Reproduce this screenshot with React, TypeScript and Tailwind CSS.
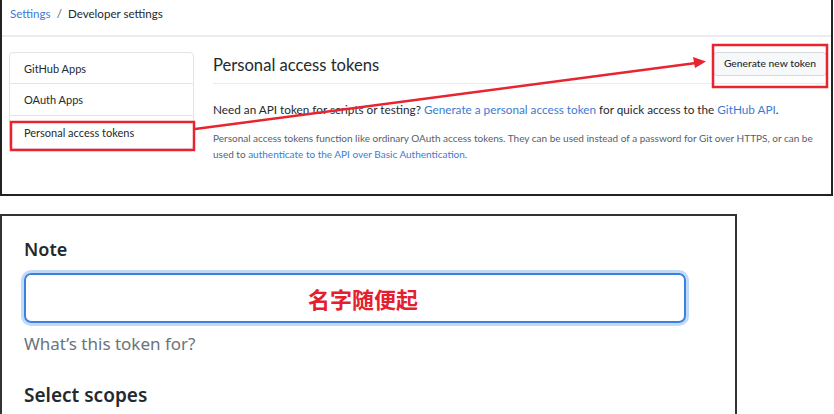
export default function App() {
  const font = { fontFamily: '"Noto Sans", "Noto Sans CJK SC", sans-serif' };
  return (
    <div className="w-[834px] h-[414px] bg-white overflow-hidden relative font-['Noto_Sans','Noto_Sans_CJK_SC',sans-serif]">
      {/* top screenshot */}
      <div className="relative h-[196px] w-[833px] border-l-2 border-r-2 border-b-2 border-[#222] text-[#24292e] font-['Lato',sans-serif]">
        <div className="h-[37px] border-b-2 border-[#eaecef] px-[8px] pt-[5px] flex items-start text-[11.6px] leading-[18px]">
          <span className="text-[#3b7bd4]">Settings</span>
          <span className="mx-[6px] text-[#586069]">/</span>
          <span className="text-[#24292e]">Developer settings</span>
        </div>
        <div className="flex items-start pl-[7px] pt-[15px] pr-[4px]">
          <div className="w-[185px] border border-[#e1e4e8] rounded-[4px] text-[11px] shrink-0">
            <div className="h-[31px] pt-[2px] flex items-center px-[14px] border-b border-[#e1e4e8]">GitHub Apps</div>
            <div className="h-[32px] pt-[2px] flex items-center px-[14px] border-b border-[#e1e4e8]">OAuth Apps</div>
            <div className="h-[32px] pt-[2px] flex items-center px-[14px]">Personal access tokens</div>
          </div>
          <div className="flex-1 ml-[19px]">
            <div className="h-[32px] flex items-center justify-between border-b border-[#eaecef]">
              <span className="text-[16.6px] leading-none -mt-[4px]">Personal access tokens</span>
              <button className="h-[24px] px-[10px] text-[10.3px] font-medium border border-[#d6d9dc] rounded-[4px] bg-[#f6f8fa] mb-[7px]">
                Generate new token
              </button>
            </div>
            <p className="mt-[18px] text-[11.75px] leading-[16px] whitespace-nowrap">
              Need an API token for scripts or testing?{" "}
              <span className="text-[#3b7bd4]">Generate a personal access token</span> for quick access to the{" "}
              <span className="text-[#3b7bd4]">GitHub API</span>.
            </p>
            <p className="mt-[12px] text-[10px] leading-[16px] text-[#586069] whitespace-nowrap">
              Personal access tokens function like ordinary OAuth access tokens. They can be used instead of a password for Git over HTTPS, or can be
              <br />
              used to <span className="text-[#3b7bd4]">authenticate to the API over Basic Authentication</span>.
            </p>
          </div>
        </div>
        {/* annotations */}
        <svg className="absolute left-[-2px] top-0 pointer-events-none" width="834" height="196">
          <rect x="11" y="122" width="183" height="28" fill="none" stroke="#e8242f" strokeWidth="2.5" />
          <rect x="713" y="45" width="114" height="42" fill="none" stroke="#e8242f" strokeWidth="2.5" />
          <line x1="195" y1="129" x2="696" y2="63" stroke="#e8242f" strokeWidth="2.5" />
          <polygon points="706,61.5 693,57 695,68" fill="#e8242f" />
        </svg>
      </div>

      {/* bottom screenshot */}
      <div className="mt-[18px] w-[737px] h-[200px] border-t-2 border-l-2 border-r-2 border-[#333] pl-[22px] text-[#24292e]" style={font}>
        <div className="pt-[21px] text-[18px] font-semibold leading-[24px]">Note</div>
        <div className="mt-[12px] w-[662px] h-[50px] rounded-[7px] border-2 border-[#3b82e0] ring-[3px] ring-[#c3daf7] flex items-center pl-[282px]">
          <span className="text-[22px] font-bold text-[#e5202e] leading-none" style={{ fontFamily: '"Noto Sans CJK SC", sans-serif' }}>
            名字随便起
          </span>
        </div>
        <div className="mt-[10px] text-[17px] text-[#6a737d] leading-[22px]">What’s this token for?</div>
        <div className="mt-[27px] text-[19px] font-semibold leading-[26px]">Select scopes</div>
      </div>
    </div>
  );
}
